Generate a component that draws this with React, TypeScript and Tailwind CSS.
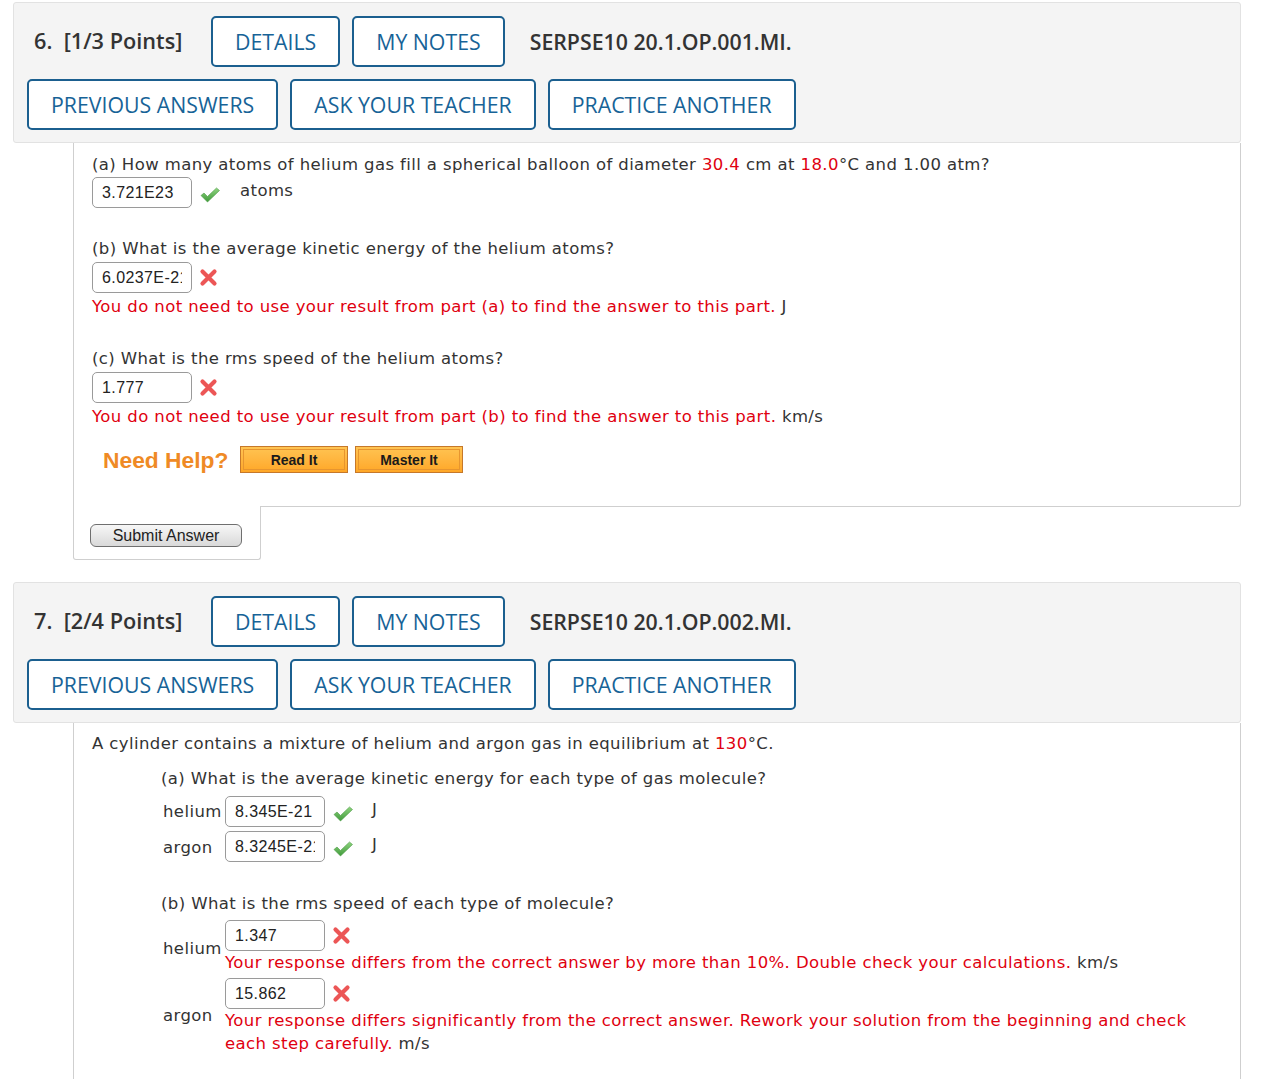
import React from "react";

const headFont = { fontFamily: '"Open Sans", "Liberation Sans", sans-serif' };

function HBtn({ children }: { children: React.ReactNode }) {
  return (
    <div className="h-[51px] px-[22px] flex items-center border-2 border-[#1b5f8f] rounded-[5px] bg-white text-[#176397] text-[21.3px] font-medium">
      {children}
    </div>
  );
}

function Header({ num, pts, code }: { num: string; pts: string; code: string }) {
  return (
    <div
      className="mx-[13px] mr-[22px] bg-[#f4f4f4] border border-[#e2e2e2] rounded-[3px] pl-[13px] pt-[13px] pb-[12px] flex flex-col gap-[12px]"
      style={headFont}
    >
      <div className="flex items-center">
        <div className="text-[21.7px] font-semibold text-[#333] pl-[7px] w-[184px]">
          {num}&nbsp; {pts}
        </div>
        <div className="flex gap-[12px]">
          <HBtn>DETAILS</HBtn>
          <HBtn>MY NOTES</HBtn>
        </div>
        <div className="ml-[25px] text-[21.3px] font-semibold text-[#333]">{code}</div>
      </div>
      <div className="flex gap-[12px]">
        <HBtn>PREVIOUS ANSWERS</HBtn>
        <HBtn>ASK YOUR TEACHER</HBtn>
        <HBtn>PRACTICE ANOTHER</HBtn>
      </div>
    </div>
  );
}

function Check() {
  return (
    <svg width="22" height="18" viewBox="0 0 22 18" className="shrink-0">
      <defs>
        <linearGradient id="cg" x1="0" y1="0" x2="0" y2="1">
          <stop offset="0" stopColor="#8fd47f" />
          <stop offset="1" stopColor="#3f9a3a" />
        </linearGradient>
      </defs>
      <path d="M2 9.5 L5 7 L8.5 10.5 L17.5 2 L20.5 4.5 L8.5 16 Z" fill="url(#cg)" stroke="#4b9a45" strokeWidth="0.6" strokeLinejoin="round" />
    </svg>
  );
}

function Cross() {
  return (
    <svg width="19" height="19" viewBox="0 0 19 19" className="shrink-0">
      <path d="M3.5 3.5 L15.5 15.5 M15.5 3.5 L3.5 15.5" stroke="#ec5656" strokeWidth="4.2" strokeLinecap="round" />
    </svg>
  );
}

function Input({ value }: { value: string }) {
  return (
    <div
      className="w-[100px] h-[31px] border border-[#9a9a9a] rounded-[5px] bg-white pl-[9px] flex items-center text-[16px] text-[#222]"
      style={{ fontFamily: '"Liberation Sans", Arial, sans-serif' }}
    >
      <div className="w-[80px] overflow-hidden whitespace-nowrap">{value}</div>
    </div>
  );
}

const body = { fontFamily: '"DejaVu Sans", Verdana, sans-serif' };
const red = "text-[#e0000f]";

function OrangeBtn({ children }: { children: React.ReactNode }) {
  return (
    <div className="w-[108px] h-[27px] border border-[#c6782a] bg-gradient-to-b from-[#ffc452] to-[#ffa726] p-[2px]">
      <div
        className="w-full h-full border border-[#e7952f] flex items-center justify-center text-[14px] font-bold text-[#1a1a1a]"
        style={{ fontFamily: '"Liberation Sans", Arial, sans-serif' }}
      >
        {children}
      </div>
    </div>
  );
}

export default function App() {
  return (
    <div className="bg-white w-[1263px] min-h-[1079px] pt-[2px] overflow-hidden text-[#333]" style={body}>
      {/* Question 6 */}
      <Header num="6." pts="[1/3 Points]" code="SERPSE10 20.1.OP.001.MI." />
      <div className="ml-[73px] mr-[22px]">
        <div className="border-l border-r border-b border-[#cfcfcf] rounded-br-[3px] pl-[18px] pt-[10px] pb-[33px] text-[16.5px] leading-[24px] tracking-[0.4px]">
          <div>
            (a) How many atoms of helium gas fill a spherical balloon of diameter <span className={red}>30.4</span> cm at{" "}
            <span className={red}>18.0</span>°C and 1.00 atm?
          </div>
          <div className="flex items-center mt-[0px] h-[31px]">
            <Input value="3.721E23" />
            <div className="ml-[7px] mt-[4px]"><Check /></div>
            <span className="ml-[19px] -mt-[3px]">atoms</span>
          </div>

          <div className="mt-[29px]">(b) What is the average kinetic energy of the helium atoms?</div>
          <div className="flex items-center mt-[1px] h-[31px]">
            <Input value="6.0237E-21" />
            <div className="ml-[7px]"><Cross /></div>
          </div>
          <div className="mt-[2px]">
            <span className={red}>You do not need to use your result from part (a) to find the answer to this part.</span> J
          </div>

          <div className="mt-[28px]">(c) What is the rms speed of the helium atoms?</div>
          <div className="flex items-center mt-[1px] h-[31px]">
            <Input value="1.777" />
            <div className="ml-[7px]"><Cross /></div>
          </div>
          <div className="mt-[2px]">
            <span className={red}>You do not need to use your result from part (b) to find the answer to this part.</span> km/s
          </div>

          <div className="flex items-center mt-[17px] ml-[11px]">
            <span
              className="text-[22.8px] font-bold text-[#ef8a25] w-[137px] tracking-normal"
              style={{ fontFamily: '"Liberation Sans", Arial, sans-serif' }}
            >
              Need Help?
            </span>
            <div className="flex gap-[7px] tracking-normal">
              <OrangeBtn>Read It</OrangeBtn>
              <OrangeBtn>Master It</OrangeBtn>
            </div>
          </div>
        </div>
        <div className="relative -mt-px w-[188px] h-[54px] bg-white border-l border-r border-b border-[#cfcfcf] rounded-b-[3px] pt-[18px] pl-[16px]">
          <div
            className="w-[152px] h-[23px] rounded-[6px] border border-[#6f6f6f] bg-gradient-to-b from-[#f7f7f7] to-[#d9d9d9] flex items-center justify-center text-[16px] text-[#222]"
            style={{ fontFamily: '"Liberation Sans", Arial, sans-serif' }}
          >
            Submit Answer
          </div>
        </div>
      </div>

      {/* Question 7 */}
      <div className="mt-[22px]">
        <Header num="7." pts="[2/4 Points]" code="SERPSE10 20.1.OP.002.MI." />
      </div>
      <div className="ml-[73px] mr-[22px]">
        <div className="border-l border-r border-[#cfcfcf] pl-[18px] pt-[9px] pb-[40px] text-[16.5px] leading-[24px] tracking-[0.4px]">
          <div>
            A cylinder contains a mixture of helium and argon gas in equilibrium at <span className={red}>130</span>°C.
          </div>
          <div className="ml-[69px] mt-[11px]">
            <div>(a) What is the average kinetic energy for each type of gas molecule?</div>
            <div className="flex items-center mt-[5px] h-[31px]">
              <span className="w-[64px] pl-[2px] mt-[1px]">helium</span>
              <Input value="8.345E-21" />
              <div className="ml-[7px] mt-[4px]"><Check /></div>
              <span className="ml-[18px] -mt-[4px]">J</span>
            </div>
            <div className="flex items-center mt-[4px] h-[31px]">
              <span className="w-[64px] pl-[2px] mt-[2px]">argon</span>
              <Input value="8.3245E-21" />
              <div className="ml-[7px] mt-[4px]"><Check /></div>
              <span className="ml-[18px] -mt-[4px]">J</span>
            </div>

            <div className="mt-[30px]">(b) What is the rms speed of each type of molecule?</div>
            <div className="flex items-center mt-[4px]">
              <span className="w-[64px] pl-[2px] mt-[3px]">helium</span>
              <div>
                <div className="flex items-center h-[31px]">
                  <Input value="1.347" />
                  <div className="ml-[7px]"><Cross /></div>
                </div>
                <div>
                  <span className={red}>Your response differs from the correct answer by more than 10%. Double check your calculations.</span> km/s
                </div>
              </div>
            </div>
            <div className="flex items-center mt-[3px]">
              <span className="w-[64px] pl-[2px] -mt-[2px]">argon</span>
              <div>
                <div className="flex items-center h-[31px]">
                  <Input value="15.862" />
                  <div className="ml-[7px]"><Cross /></div>
                </div>
                <div className="leading-[23px]">
                  <span className={red}>
                    Your response differs significantly from the correct answer. Rework your solution from the beginning and check
                    <br />
                    each step carefully.
                  </span>{" "}
                  m/s
                </div>
              </div>
            </div>
          </div>
        </div>
      </div>
    </div>
  );
}
